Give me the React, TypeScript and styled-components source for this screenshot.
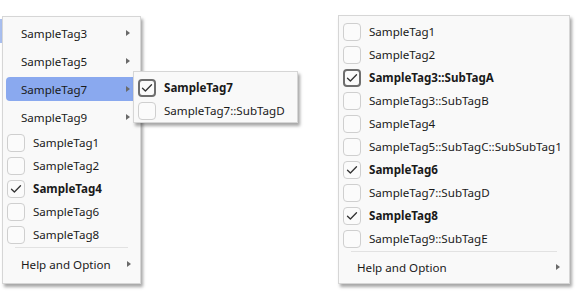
import React from "react";
import styled, { createGlobalStyle } from "styled-components";

const Global = createGlobalStyle`
  html, body { margin: 0; padding: 0; background: #ffffff; }
  body { font-family: "Segoe UI", "Noto Sans", "Open Sans", sans-serif; }
`;

const Desktop = styled.div`
  position: relative;
  width: 582px;
  height: 297px;
  display: flex;
  align-items: flex-start;
  padding: 15px 0 0 2px;
  box-sizing: border-box;
`;

const ParentEdge = styled.div`
  position: absolute;
  left: 0;
  top: 19px;
  width: 2px;
  height: 24px;
  background: #a9bff0;
`;

const Menu = styled.div<{ $w: number; $h: number; $top: number; $left: number }>`
  position: relative;
  box-sizing: border-box;
  width: ${(p) => p.$w}px;
  height: ${(p) => p.$h}px;
  margin-top: ${(p) => p.$top}px;
  margin-left: ${(p) => p.$left}px;
  background: #f9f9f9;
  border: 1px solid #d6d6d6;
  box-shadow: 2px 3px 3px rgba(0, 0, 0, 0.35);
  display: flex;
  flex-direction: column;
  font-size: 11.6px;
  color: #1a1a1a;
`;

const SubMenu = styled(Menu)`
  position: absolute;
  left: 133px;
  top: 71px;
  margin: 0;
  padding-top: 4px;
`;

const SubItem = styled.div`
  height: 28px;
  display: flex;
  align-items: center;
  padding: 0 2px 0 3px;
  box-sizing: border-box;
`;

const SubInner = styled.div<{ $active?: boolean }>`
  flex: 1;
  height: 24px;
  display: flex;
  align-items: center;
  justify-content: space-between;
  padding: 0 8px 0 15px;
  border-radius: 4px;
  background: ${(p) => (p.$active ? "#8aa9ef" : "transparent")};
`;

const Arrow = styled.span`
  width: 0;
  height: 0;
  border-top: 3.5px solid transparent;
  border-bottom: 3.5px solid transparent;
  border-left: 4px solid #6a6a6a;
`;

const CheckRow = styled.div<{ $pad: number }>`
  height: 23px;
  display: flex;
  align-items: center;
  padding-left: ${(p) => p.$pad}px;
  gap: 8px;
  white-space: nowrap;
`;

const Box = styled.div<{ $focus?: boolean }>`
  box-sizing: border-box;
  width: 18px;
  height: 18px;
  border-radius: 4px;
  border: ${(p) => (p.$focus ? "2px solid #6e6e6e" : "1px solid #cfcfcf")};
  background: #fbfbfb;
  display: flex;
  align-items: center;
  justify-content: center;
`;

const Label = styled.span<{ $bold?: boolean }>`
  font-weight: ${(p) => (p.$bold ? 700 : 400)};
`;

const Separator = styled.div<{ $l: number; $r: number }>`
  height: 1px;
  background: #e2e2e2;
  margin: 1px ${(p) => p.$r}px 2px ${(p) => p.$l}px;
`;

const HelpRow = styled.div<{ $h: number; $r: number }>`
  height: ${(p) => p.$h}px;
  display: flex;
  align-items: center;
  justify-content: space-between;
  padding: 0 ${(p) => p.$r}px 0 18px;
`;

const Check = () => (
  <svg width="12" height="10" viewBox="0 0 12 10">
    <path d="M1.5 5.2 L4.4 8 L10.5 1.8" fill="none" stroke="#333" strokeWidth="1.3" strokeLinecap="round" strokeLinejoin="round" />
  </svg>
);

type Tag = { name: string; checked?: boolean; focus?: boolean };

const CheckItem = ({ t, pad }: { t: Tag; pad: number }) => (
  <CheckRow $pad={pad}>
    <Box $focus={t.focus}>{t.checked && <Check />}</Box>
    <Label $bold={t.checked}>{t.name}</Label>
  </CheckRow>
);

const leftSubs = ["SampleTag3", "SampleTag5", "SampleTag7", "SampleTag9"];
const leftTags: Tag[] = [
  { name: "SampleTag1" },
  { name: "SampleTag2" },
  { name: "SampleTag4", checked: true },
  { name: "SampleTag6" },
  { name: "SampleTag8" },
];
const subTags: Tag[] = [
  { name: "SampleTag7", checked: true, focus: true },
  { name: "SampleTag7::SubTagD" },
];
const rightTags: Tag[] = [
  { name: "SampleTag1" },
  { name: "SampleTag2" },
  { name: "SampleTag3::SubTagA", checked: true, focus: true },
  { name: "SampleTag3::SubTagB" },
  { name: "SampleTag4" },
  { name: "SampleTag5::SubTagC::SubSubTag1" },
  { name: "SampleTag6", checked: true },
  { name: "SampleTag7::SubTagD" },
  { name: "SampleTag8", checked: true },
  { name: "SampleTag9::SubTagE" },
];

export default function App() {
  return (
    <>
      <Global />
      <Desktop>
        <ParentEdge />
        <Menu $w={139} $h={268} $top={1} $left={0} style={{ paddingTop: 2 }}>
          {leftSubs.map((s) => (
            <SubItem key={s}>
              <SubInner $active={s === "SampleTag7"}>
                <span>{s}</span>
                <Arrow />
              </SubInner>
            </SubItem>
          ))}
          {leftTags.map((t) => (
            <CheckItem key={t.name} t={t} pad={4} />
          ))}
          <Separator $l={12} $r={12} />
          <HelpRow $h={28} $r={9}>
            <span>Help and Option</span>
            <Arrow />
          </HelpRow>
        </Menu>
        <SubMenu $w={165} $h={52} $top={0} $left={0}>
          {subTags.map((t) => (
            <CheckItem key={t.name} t={t} pad={4} />
          ))}
        </SubMenu>
        <Menu $w={232} $h={269} $top={0} $left={197} style={{ paddingTop: 4 }}>
          {rightTags.map((t) => (
            <CheckItem key={t.name} t={t} pad={4} />
          ))}
          <Separator $l={12} $r={12} />
          <HelpRow $h={26} $r={9}>
            <span>Help and Option</span>
            <Arrow />
          </HelpRow>
        </Menu>
      </Desktop>
    </>
  );
}
